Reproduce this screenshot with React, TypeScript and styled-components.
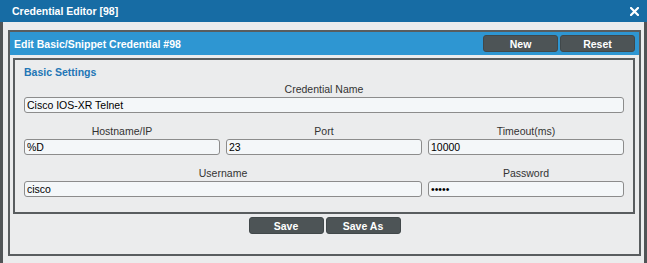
import * as React from 'react'
import styled, { createGlobalStyle } from 'styled-components'

const GlobalStyle = createGlobalStyle`
  html, body {
    margin: 0;
    padding: 0;
    background: #ebeced;
  }

  body {
    font-family: 'Liberation Sans', Arial, sans-serif;
    font-size: 10.5px;
    color: #333;
  }
`

interface FieldDef {
  label: string
  value: string
  span?: number
  type?: string
}

const rows: FieldDef[][] = [
  [{ label: 'Credential Name', value: 'Cisco IOS-XR Telnet', span: 3 }],
  [
    { label: 'Hostname/IP', value: '%D' },
    { label: 'Port', value: '23' },
    { label: 'Timeout(ms)', value: '10000' }
  ],
  [
    { label: 'Username', value: 'cisco', span: 2 },
    { label: 'Password', value: 'cisco', type: 'password' }
  ]
]

const CloseIcon = () => (
  <svg width="9" height="9" viewBox="0 0 9 9">
    <path d="M1 1 L8 8 M8 1 L1 8" stroke="#fff" strokeWidth="2.2" strokeLinecap="square" />
  </svg>
)

export default function App() {
  return (
    <Window>
      <GlobalStyle />
      <TitleBar>
        <span>Credential Editor [98]</span>
        <CloseIcon />
      </TitleBar>
      <Body>
        <Panel>
          <PanelHeader>
            <span>Edit Basic/Snippet Credential #98</span>
            <ButtonGroup>
              <Button>New</Button>
              <Button>Reset</Button>
            </ButtonGroup>
          </PanelHeader>
          <Settings>
            <Legend>Basic Settings</Legend>
            <FieldGrid>
              {rows.flat().map(field => (
                <Field key={field.label} span={field.span || 1}>
                  <Label>{field.label}</Label>
                  <Input
                    type={field.type || 'text'}
                    defaultValue={field.value}
                    readOnly
                  />
                </Field>
              ))}
            </FieldGrid>
          </Settings>
          <Footer>
            <Button>Save</Button>
            <Button>Save As</Button>
          </Footer>
        </Panel>
      </Body>
    </Window>
  )
}

const Window = styled.div`
  width: 647px;
  height: 263px;
  display: flex;
  flex-direction: column;
  overflow: hidden;

  background: #ebeced;
`

const TitleBar = styled.div`
  flex: none;
  display: flex;
  align-items: center;
  justify-content: space-between;
  height: 22px;
  padding: 0 8px 0 12px;

  color: #fff;
  font-weight: bold;
  background: #176ca4;
`

const Body = styled.div`
  flex: 1;
  padding: 8px 3px 0 5px;

  border-left: 3px solid #505456;
  border-right: 3px solid #505456;
`

const Panel = styled.div`
  display: flex;
  flex-direction: column;
  padding-bottom: 20px;

  border: 2px solid #595d5f;
`

const PanelHeader = styled.div`
  display: flex;
  align-items: center;
  height: 23px;
  padding: 0 4px 0 4px;

  color: #fff;
  font-weight: bold;
  background: #2e96d2;
`

const ButtonGroup = styled.div`
  display: flex;
  gap: 2px;
  margin-left: auto;
`

const Button = styled.button`
  width: 75px;
  height: 17px;
  padding: 0;

  color: #fff;
  font-family: inherit;
  font-size: 10.5px;
  font-weight: bold;
  background: #4d5456;
  border: 1px solid #41484a;
  border-radius: 3px;
`

const Settings = styled.div`
  margin: 3px 4px 0 3px;
  padding: 5px 9px 15px 9px;

  border: 2px solid #595d5f;
`

const Legend = styled.div`
  margin-bottom: 4px;
  line-height: 14px;

  color: #2276b6;
  font-weight: bold;
`

const FieldGrid = styled.div`
  display: grid;
  grid-template-columns: repeat(3, 1fr);
  column-gap: 6px;
  row-gap: 12px;
`

const Field = styled.div<{ span: number }>`
  display: flex;
  flex-direction: column;
  grid-column: span ${p => p.span};
`

const Label = styled.div`
  margin-bottom: 1px;
  line-height: 13px;
  text-align: center;

  color: #333;
`

const Input = styled.input`
  box-sizing: border-box;
  width: 100%;
  height: 16px;
  padding: 0 2px;

  color: #000;
  font-family: inherit;
  font-size: 10.5px;
  background: #f4f7f9;
  border: 1px solid #8c8c8c;
  border-radius: 3px;
  outline: none;
`

const Footer = styled.div`
  display: flex;
  justify-content: center;
  gap: 2px;
  margin-top: 3px;
`
